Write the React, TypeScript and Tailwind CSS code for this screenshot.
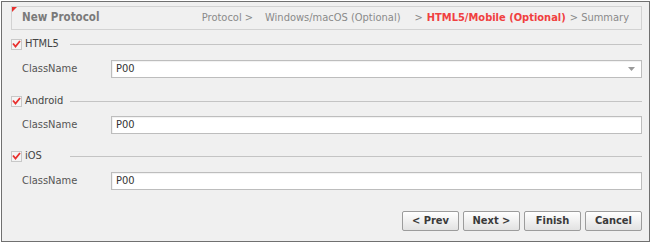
import React from 'react';

const font = { fontFamily: '"DejaVu Sans Condensed", "DejaVu Sans", sans-serif' };

const CheckBox: React.FC = () => (
  <span className="flex h-[11px] w-[11px] items-center justify-center border border-[#c8c8c8] bg-[#f4f4f4]">
    <svg width="9" height="8" viewBox="0 0 9 8" fill="none">
      <path d="M1 3.5 L3.5 6.5 L8 1" stroke="#e8312f" strokeWidth="1.8" />
    </svg>
  </span>
);

const SectionHeader: React.FC<{ label: string }> = ({ label }) => (
  <div className="flex h-[16px] items-center">
    <CheckBox />
    <span className="ml-[3px] w-[45px] text-[11px] text-[#444]">{label}</span>
    <div className="h-px flex-1 bg-[#c4c4c4]" />
  </div>
);

const ClassRow: React.FC<{ dropdown?: boolean }> = ({ dropdown }) => (
  <div className="flex items-center pl-[11px]">
    <span className="w-[89px] text-[11px] text-[#555]">ClassName</span>
    <div className="relative flex h-[18px] flex-1 items-center border border-[#bdbdbd] bg-white pl-[4px] text-[11px] text-[#333] shadow-[inset_1px_1px_1px_rgba(0,0,0,0.06)]">
      P00
      {dropdown && (
        <svg className="absolute right-[6px] top-[6px]" width="7" height="4" viewBox="0 0 7 4">
          <path d="M0 0 H7 L3.5 4 Z" fill="#9a9a9a" />
        </svg>
      )}
    </div>
  </div>
);

const WizardButton: React.FC<{ label: string }> = ({ label }) => (
  <button className="h-[20px] w-[57px] rounded-[2px] border border-[#9c9c9c] bg-gradient-to-b from-[#ffffff] to-[#e2e2e2] text-[11px] font-bold text-[#3a3a3a]">
    {label}
  </button>
);

export default function App() {
  return (
    <div className="h-[243px] w-[652px] bg-white p-px" style={font}>
      <div className="flex h-[241px] w-[649px] flex-col border border-[#707070] bg-[#f0f0f0] pl-[9px] pr-[7px] pt-[4px]">
        {/* Header with breadcrumb */}
        <div className="relative flex h-[24px] items-center justify-between border border-[#d2d2d2] bg-[#f0f0f0] pl-[10px] pr-[12px]">
          <span className="absolute left-0 top-0 h-0 w-0 border-r-[5px] border-t-[5px] border-r-transparent border-t-[#e8312f]" />
          <span className="text-[11.5px] font-bold text-[#7a7a7a]">New Protocol</span>
          <div className="flex items-center text-[11px] text-[#8a8a8a]">
            <span>Protocol &gt;</span>
            <span className="ml-[12px]">Windows/macOS (Optional)</span>
            <span className="ml-[14px]">&gt;</span>
            <span className="ml-[4px] font-bold text-[#f04040]">HTML5/Mobile (Optional)</span>
            <span className="ml-[4px]">&gt; Summary</span>
          </div>
        </div>

        {/* HTML5 */}
        <div className="mt-[6px]">
          <SectionHeader label="HTML5" />
        </div>
        <div className="mt-[8px]">
          <ClassRow dropdown />
        </div>

        {/* Android */}
        <div className="mt-[15px]">
          <SectionHeader label="Android" />
        </div>
        <div className="mt-[7px]">
          <ClassRow />
        </div>

        {/* iOS */}
        <div className="mt-[14px]">
          <SectionHeader label="iOS" />
        </div>
        <div className="mt-[8px]">
          <ClassRow />
        </div>

        {/* Buttons */}
        <div className="mt-[21px] flex justify-end gap-[4px]">
          <WizardButton label="< Prev" />
          <WizardButton label="Next >" />
          <WizardButton label="Finish" />
          <WizardButton label="Cancel" />
        </div>
      </div>
    </div>
  );
}
